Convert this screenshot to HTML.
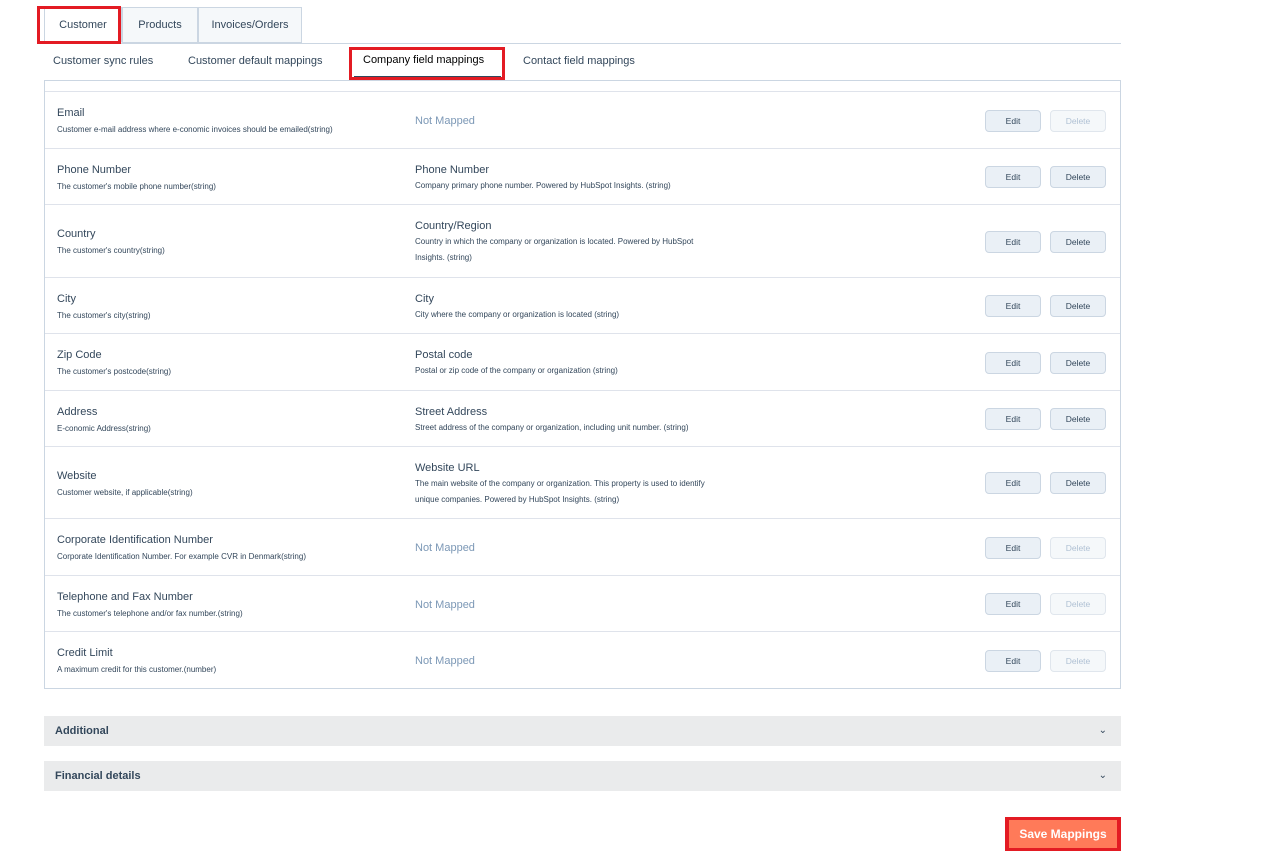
<!DOCTYPE html><html><head><style>
body{margin:0;width:1287px;height:864px;background:#fff;font-family:"Liberation Sans",sans-serif;color:#33475b;position:relative;overflow:hidden}
.a{position:absolute}
.tab{position:absolute;top:7px;height:36px;border:1px solid #cbd6e2;background:#f5f8fa;font-size:11px;line-height:34px;text-align:center;box-sizing:border-box}
.st{position:absolute;top:55px;font-size:11px}
.row{position:absolute;left:45px;width:1075px;border-top:1px solid #dfe3eb;box-sizing:border-box}
.row .t{position:absolute;left:12px;font-size:11px;margin-top:2px}
.row .d{position:absolute;left:12px;font-size:8px;color:#33475b;margin-top:1px}
.row .m{position:absolute;left:370px;font-size:11px;margin-top:2px}
.row .md{position:absolute;left:370px;font-size:8px;line-height:16px;width:340px;margin-top:1px}
.row .nm{position:absolute;left:370px;font-size:11px;color:#7c98b6;margin-top:2px}
.btn{position:absolute;width:56px;height:22px;border:1px solid #cbd6e2;border-radius:4px;background:#eaf0f6;font-size:8.5px;line-height:20px;text-align:center;box-sizing:border-box}
.dis{background:#f5f8fa;color:#b0c1d4;border-color:#e0e6ed}
.acc{position:absolute;left:44px;width:1077px;height:30px;background:#eaebec;font-size:11px;font-weight:bold;line-height:30px;text-indent:11px;color:#33475b}
.acc span{position:absolute;right:14px;top:0;font-weight:normal;font-size:10px}
</style></head><body>
<div class="a" style="left:44px;top:43px;width:1077px;border-top:1px solid #cbd6e2"></div>
<div class="tab" style="left:44px;width:78px;background:#fff;border-bottom-color:#fff">Customer</div>
<div class="a" style="left:37px;top:6px;width:78px;height:32px;border:3px solid #e31b23"></div>
<div class="tab" style="left:122px;width:76px">Products</div>
<div class="tab" style="left:198px;width:104px">Invoices/Orders</div>
<div class="st" style="left:53px">Customer sync rules</div>
<div class="st" style="left:188px">Customer default mappings</div>
<div class="st" style="left:363px;top:54px;color:#000">Company field mappings</div>
<div class="a" style="left:354px;top:76px;width:147px;height:3px;background:#33475b"></div>
<div class="a" style="left:349px;top:47px;width:150px;height:27px;border:3px solid #e31b23"></div>
<div class="st" style="left:523px">Contact field mappings</div>
<div class="a" style="left:44px;top:80px;width:1075px;height:607px;border:1px solid #cbd6e2"></div>

<div class="row" style="top:91px;height:57px"><div class="t" style="top:13px">Email</div><div class="d" style="top:32px">Customer e-mail address where e-conomic invoices should be emailed(string)</div><div class="nm" style="top:21px">Not Mapped</div><div class="btn" style="left:940px;top:18px">Edit</div><div class="btn dis" style="left:1005px;top:18px">Delete</div></div>
<div class="row" style="top:148px;height:56px"><div class="t" style="top:13px">Phone Number</div><div class="d" style="top:32px">The customer's mobile phone number(string)</div><div class="m" style="top:13px">Phone Number</div><div class="md" style="top:28px">Company primary phone number. Powered by HubSpot Insights. (string)</div><div class="btn" style="left:940px;top:17px">Edit</div><div class="btn" style="left:1005px;top:17px">Delete</div></div>
<div class="row" style="top:204px;height:73px"><div class="t" style="top:21px">Country</div><div class="d" style="top:40px">The customer's country(string)</div><div class="m" style="top:13px">Country/Region</div><div class="md" style="top:28px;width:305px">Country in which the company or organization is located. Powered by HubSpot Insights. (string)</div><div class="btn" style="left:940px;top:26px">Edit</div><div class="btn" style="left:1005px;top:26px">Delete</div></div>
<div class="row" style="top:277px;height:56px"><div class="t" style="top:13px">City</div><div class="d" style="top:32px">The customer's city(string)</div><div class="m" style="top:13px">City</div><div class="md" style="top:28px">City where the company or organization is located (string)</div><div class="btn" style="left:940px;top:17px">Edit</div><div class="btn" style="left:1005px;top:17px">Delete</div></div>
<div class="row" style="top:333px;height:57px"><div class="t" style="top:13px">Zip Code</div><div class="d" style="top:32px">The customer's postcode(string)</div><div class="m" style="top:13px">Postal code</div><div class="md" style="top:28px">Postal or zip code of the company or organization (string)</div><div class="btn" style="left:940px;top:18px">Edit</div><div class="btn" style="left:1005px;top:18px">Delete</div></div>
<div class="row" style="top:390px;height:56px"><div class="t" style="top:13px">Address</div><div class="d" style="top:32px">E-conomic Address(string)</div><div class="m" style="top:13px">Street Address</div><div class="md" style="top:28px">Street address of the company or organization, including unit number. (string)</div><div class="btn" style="left:940px;top:17px">Edit</div><div class="btn" style="left:1005px;top:17px">Delete</div></div>
<div class="row" style="top:446px;height:72px"><div class="t" style="top:21px">Website</div><div class="d" style="top:40px">Customer website, if applicable(string)</div><div class="m" style="top:13px">Website URL</div><div class="md" style="top:28px;width:305px">The main website of the company or organization. This property is used to identify unique companies. Powered by HubSpot Insights. (string)</div><div class="btn" style="left:940px;top:25px">Edit</div><div class="btn" style="left:1005px;top:25px">Delete</div></div>
<div class="row" style="top:518px;height:57px"><div class="t" style="top:13px">Corporate Identification Number</div><div class="d" style="top:32px">Corporate Identification Number. For example CVR in Denmark(string)</div><div class="nm" style="top:21px">Not Mapped</div><div class="btn" style="left:940px;top:18px">Edit</div><div class="btn dis" style="left:1005px;top:18px">Delete</div></div>
<div class="row" style="top:575px;height:56px"><div class="t" style="top:13px">Telephone and Fax Number</div><div class="d" style="top:32px">The customer's telephone and/or fax number.(string)</div><div class="nm" style="top:21px">Not Mapped</div><div class="btn" style="left:940px;top:17px">Edit</div><div class="btn dis" style="left:1005px;top:17px">Delete</div></div>
<div class="row" style="top:631px;height:57px"><div class="t" style="top:13px">Credit Limit</div><div class="d" style="top:32px">A maximum credit for this customer.(number)</div><div class="nm" style="top:21px">Not Mapped</div><div class="btn" style="left:940px;top:18px">Edit</div><div class="btn dis" style="left:1005px;top:18px">Delete</div></div>

<div class="acc" style="top:716px">Additional<span>&#8964;</span></div>
<div class="acc" style="top:761px">Financial details<span>&#8964;</span></div>
<div class="a" style="left:1005px;top:817px;width:116px;height:34px;background:#e31b23"></div>
<div class="a" style="left:1009px;top:820px;width:108px;height:28px;background:#ff7a59;color:#fff;font-size:12px;font-weight:bold;line-height:28px;text-align:center">Save Mappings</div>
</body></html>
